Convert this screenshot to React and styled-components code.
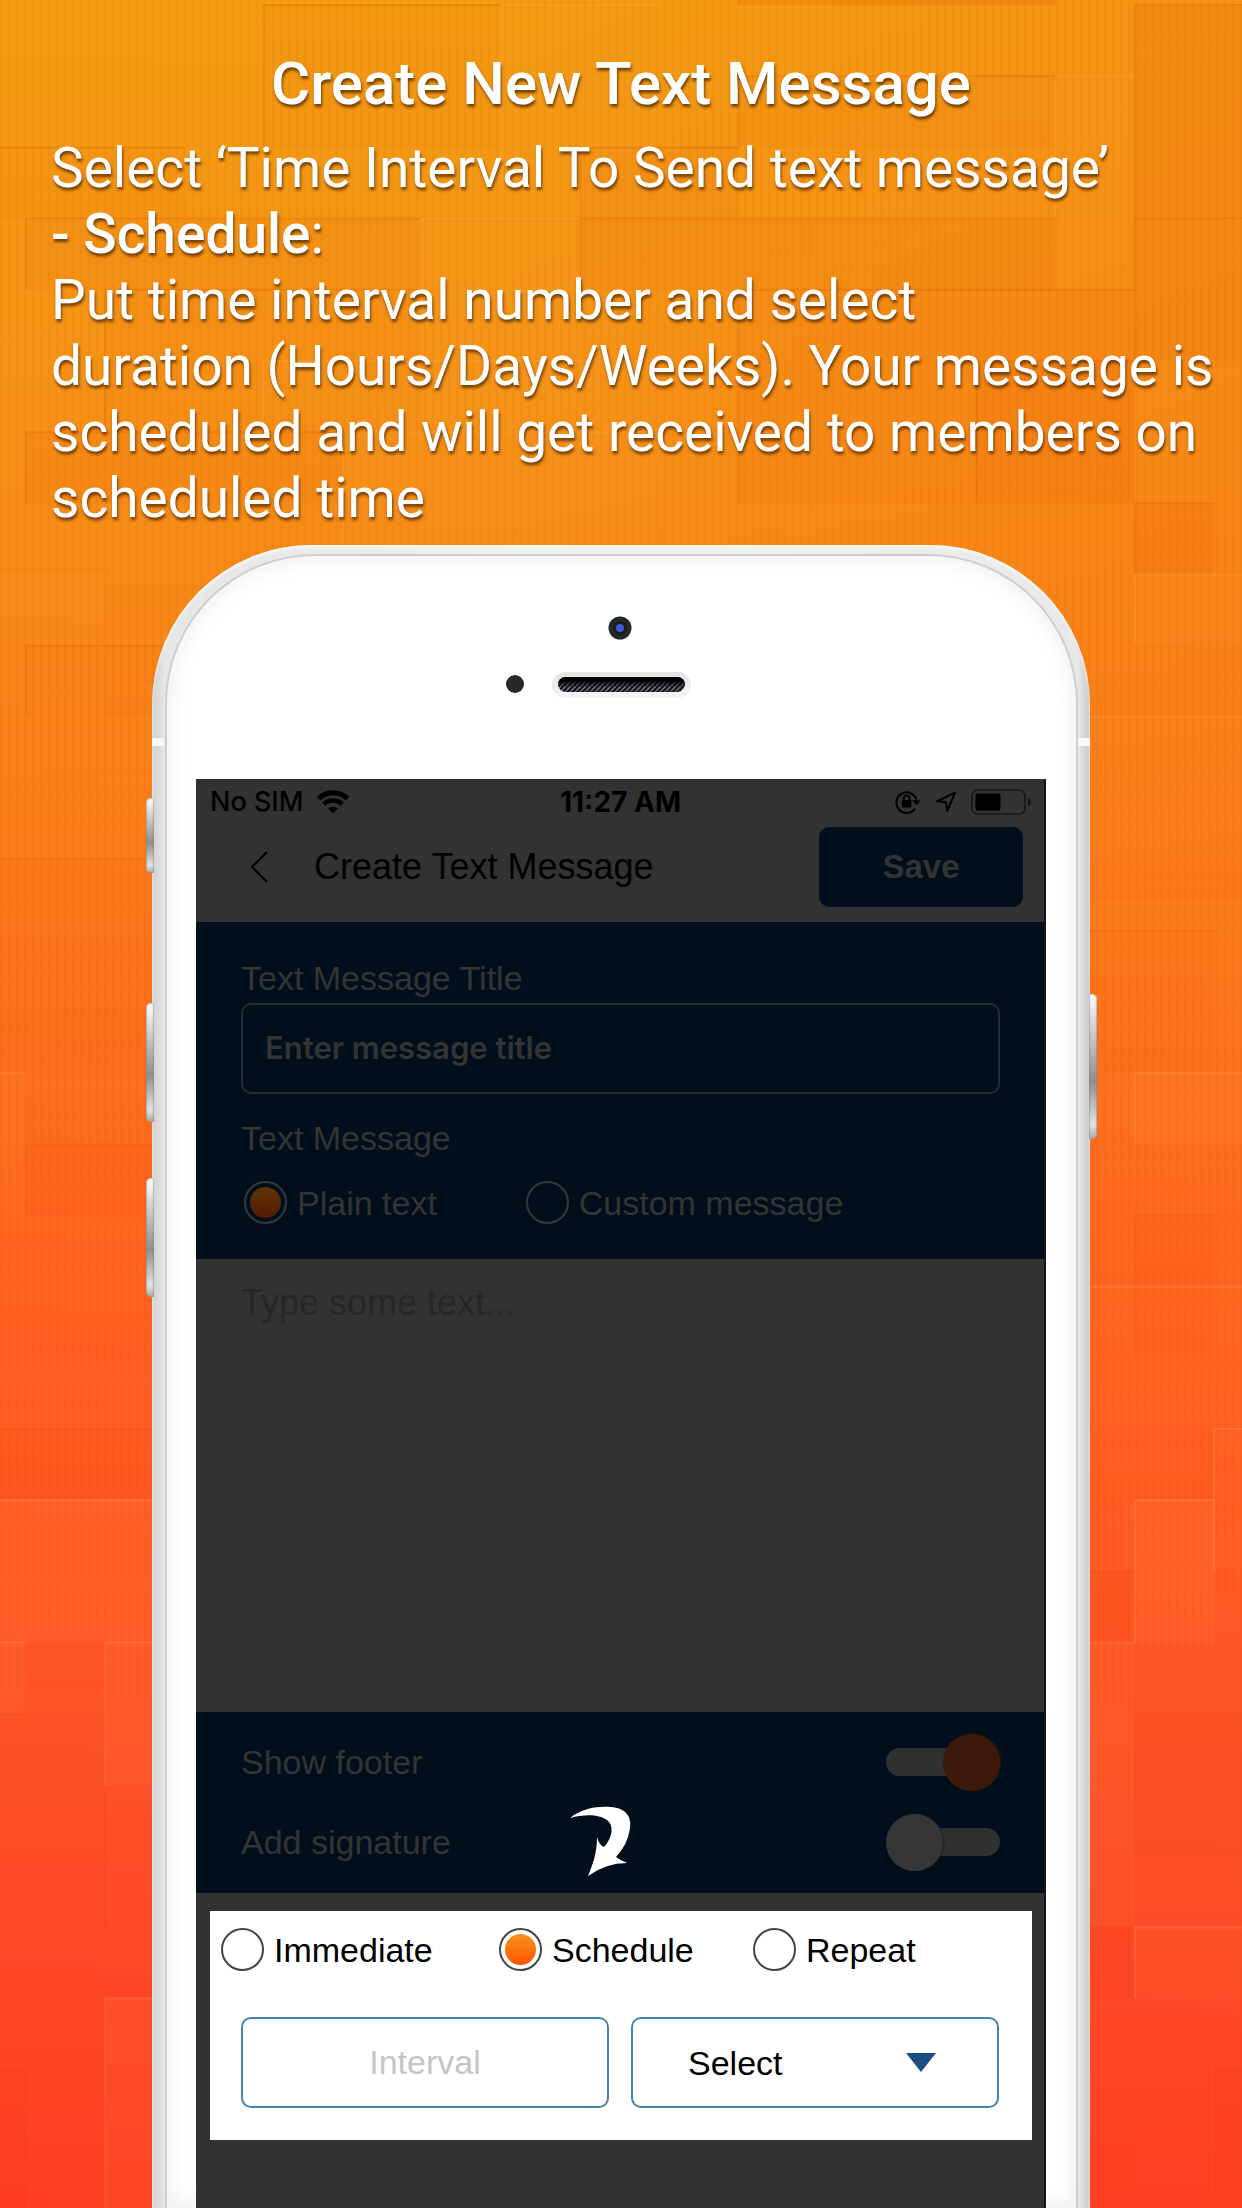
import React from "react";
import styled, { createGlobalStyle, css } from "styled-components";

const sans = '"Liberation Sans", Arial, sans-serif';
const system = 'Inter, "Liberation Sans", sans-serif';

const GlobalStyle = createGlobalStyle`
  *, *::before, *::after { box-sizing: border-box; }
  body { margin: 0; background: #ff4224; }
  h1, h2, p, fieldset { margin: 0; padding: 0; border: 0; min-width: 0; }
  input, textarea, select, button { font: inherit; margin: 0; outline: none; }
`;

const Page = styled.main`
  position: relative;
  isolation: isolate;
  display: flex;
  flex-direction: column;
  min-height: 100vh;
  overflow: hidden;
  font-family: Roboto, sans-serif;
  color: #fff;
`;

const Backdrop = styled.svg`
  position: absolute;
  inset: 0;
  z-index: -1;
  width: 100%;
  height: 100%;
`;

const Intro = styled.header`
  padding: 51px 0 0 51px;
  text-shadow: 1px 3px 3px rgba(60, 30, 0, 0.7);
`;

const Title = styled.h1`
  margin: 0 0 18px;
  padding-right: 51px;
  text-align: center;
  font-size: 60px;
  line-height: 66px;
  font-weight: 500;
`;

const Copy = styled.p`
  font-size: 55px;
  line-height: 66px;
  white-space: pre-line;
  strong { font-weight: 500; }
`;

const Phone = styled.section`
  position: relative;
  flex: 1;
  display: flex;
  flex-direction: column;
  width: 76%;
  max-width: 938px;
  margin: 14px auto 0;
  padding: 9px 12px 0 13px;
  border-radius: 160px 160px 0 0;
  background: linear-gradient(90deg, #d0d0d0 0, #e6e6e6 13px, #f4f4f4 50%, #e8e8e8 926px, #c6c6c6 100%);
  box-shadow: inset 0 2px 3px #fafafa;
`;

const Face = styled.div`
  flex: 1;
  display: flex;
  flex-direction: column;
  padding: 0 30px 0 29px;
  border: solid #cfcfcf;
  border-width: 2px 2px 0;
  border-radius: 150px 150px 0 0;
  background: #fff;
  box-shadow: inset 0 0 20px 4px #f1f1f1;
`;

const SideButton = styled.i`
  position: absolute;
  top: ${(p) => p.$top}px;
  ${(p) => (p.$right ? "right: -7px;" : "left: -6px;")}
  width: 8px;
  height: ${(p) => p.$length}px;
  border-radius: ${(p) => (p.$right ? "1px 5px 5px 1px" : "5px 1px 1px 5px")};
  background: linear-gradient(#fff, #d8d8d8 20%, #8f8f8f 60%, #e2e2e2 90%, #aaa);
  box-shadow: inset 0 0 1px 1px rgba(130, 130, 130, 0.5);
`;

const Band = styled.i`
  position: absolute;
  top: 193px;
  ${(p) => (p.$right ? "right: 0;" : "left: 0;")}
  width: 12px;
  height: 8px;
  background: #f8f8f8;
`;

const Sensors = styled.svg`
  display: block;
  align-self: center;
  width: 220px;
  height: 223px;
  overflow: visible;
`;

const Screen = styled.div`
  flex: 1;
  padding-bottom: 68px;
  border-right: 2px solid #151515;
  background: #323232;
  color: #000;
  font-family: ${sans};
  font-size: 34px;
  line-height: 40px;
`;

const StatusBar = styled.div`
  display: grid;
  grid-template-columns: 1fr auto 1fr;
  align-items: center;
  height: 46px;
  padding: 0 13px 0 14px;
  font-family: ${system};
  font-size: 27px;
  line-height: 32px;
  font-weight: 500;
  white-space: nowrap;
`;

const StatusGroup = styled.div`
  display: flex;
  align-items: center;
  gap: 14px;
  ${(p) => p.$end && "justify-content: flex-end;"}
`;

const Clock = styled.time`
  font-size: 28px;
  font-weight: 700;
`;

const NavBar = styled.div`
  display: flex;
  align-items: center;
  height: 97px;
  padding: 0 21px 14px 46px;
`;

const BackButton = styled.button`
  display: flex;
  padding: 8px;
  border: 0;
  background: none;
  color: #000;
`;

const NavTitle = styled.h2`
  flex: 1;
  margin-left: 38px;
  font-size: 36px;
  line-height: 40px;
  font-weight: 400;
`;

const SaveButton = styled.button`
  width: 204px;
  height: 80px;
  border: 1px solid #001424;
  border-radius: 10px;
  background: #000f1b;
  color: #333;
  font-size: 33px !important;
  font-weight: 700 !important;
`;

const Panel = styled.div`
  padding: ${(p) => p.$pad};
  background: #000f1b;
  color: #343434;
`;

const Label = styled.label`
  display: block;
  line-height: 40px;
`;

const fieldBox = css`
  display: block;
  width: 100%;
  height: 91px;
  border: 2px solid ${(p) => (p.$dim ? "#252b30" : "#4583b0")};
  border-radius: 10px;
`;

const TitleInput = styled.input`
  ${fieldBox}
  margin: 5px 0 24px;
  padding: 0 22px 2px;
  background: transparent;
  color: #333;
  font: 600 31px/40px ${system} !important;
  &::placeholder { color: #343434; opacity: 1; }
`;

const Group = styled.fieldset`
  legend { padding: 0; }
`;

const RadioRow = styled.div`
  display: grid;
  grid-template-columns: ${(p) => p.$columns};
  margin: ${(p) => p.$margin};
`;

const Choice = styled.label`
  display: flex;
  align-items: center;
  gap: 10px;
  white-space: nowrap;
`;

const Radio = styled.input`
  appearance: none;
  flex: none;
  width: 43px;
  height: 43px;
  padding: 4px;
  border: 2px solid ${(p) => (p.$dim ? "#33383b" : "#444")};
  border-radius: 50%;
  &:checked::before {
    content: "";
    display: block;
    width: 31px;
    height: 31px;
    border-radius: 50%;
    background: ${(p) =>
      p.$dim ? "linear-gradient(#5e3405, #521a00)" : "linear-gradient(#f7931a, #ff5400)"};
  }
`;

const Message = styled.textarea`
  display: block;
  width: 100%;
  height: 453px;
  padding: 24px 45px;
  border: 0;
  resize: none;
  background: #323232;
  font-size: 36px !important;
  line-height: 40px !important;
  &::placeholder { color: #262626; opacity: 1; }
`;

const SwitchRow = styled.label`
  display: flex;
  align-items: center;
  justify-content: space-between;
  height: 80px;
`;

const Switch = styled.input`
  appearance: none;
  display: grid;
  align-items: center;
  width: 114px;
  height: 57px;
  &::before, &::after { content: ""; grid-area: 1 / 1; }
  &::before {
    height: 28px;
    border-radius: 14px;
    background: #303030;
  }
  &::after {
    width: 57px;
    height: 57px;
    border-radius: 50%;
    background: #363636;
    box-shadow: 1px 0 2px #1c1c1c;
  }
  &:checked::after {
    justify-self: end;
    background: #3d180b;
  }
`;

const Pointer = styled.svg`
  position: absolute;
  right: 4px;
  top: 4px;
`;

const PointerAnchor = styled.div`
  position: relative;
  width: 52%;
  height: 0;
`;

const Card = styled.div`
  margin: 18px 12px 0 14px;
  padding: 17px 11px 32px;
  background: #fff;
`;

const Fields = styled.div`
  display: grid;
  grid-template-columns: 1fr 1fr;
  gap: 22px;
  margin: 46px 22px 0 20px;
`;

const Interval = styled.input`
  ${fieldBox}
  background: #fff;
  text-align: center;
  &::placeholder { color: #c4c4c9; opacity: 1; }
`;

const SelectWrap = styled.div`
  display: grid;
  align-items: center;
  > * { grid-area: 1 / 1; }
  svg { justify-self: end; margin-right: 63px; pointer-events: none; }
`;

const Select = styled.select`
  ${fieldBox}
  appearance: none;
  padding: 0 55px;
  background: #fff;
  color: #000;
`;

// Tiles are [column, row, columns wide, rows high, opacity]; negative opacity darkens.
const tiles = [
  [9, -1, 4, 1, -0.12], [3, 0, 3, 2, -0.03], [6, 0, 2, 3, 0.03], [14, 0, 2, 3, -0.07],
  [-1, 2, 3, 1, -0.03], [7, 2, 2, 1, -0.05], [9, 1, 4, 1, -0.03], [13, 1, 1, 2, 0.03],
  [0, 3, 5, 1, -0.05], [5, 3, 2, 2, 0.04], [7, 3, 6, 1, -0.06], [9, 4, 5, 3, -0.05],
  [1, 4, 4, 2, -0.03], [3, 5, 5, 1, 0.04], [0, 6, 4, 1, -0.05], [4, 6, 4, 2, 0.03],
  [14, 3, 2, 2, -0.06], [14, 7, 1, 1, -0.08], [12, 5, 2, 2, -0.06], [-1, 8, 2, 2, 0.03],
  [14, 8, 2, 1, 0.06], [13, 10, 3, 2, 0.05], [0, 9, 2, 1, -0.04], [-1, 12, 3, 3, -0.04],
  [0, 16, 2, 1, -0.07], [13, 13, 2, 2, -0.04], [14, 15, 2, 1, 0.06], [-1, 15, 1, 2, 0.04],
  [14, 17, 1, 2, -0.05], [-1, 20, 3, 1, -0.04], [-1, 21, 3, 2, 0.06], [13, 18, 3, 2, 0.04],
  [14, 21, 1, 2, 0.08], [15, 20, 1, 2, 0.04], [13, 22, 1, 1, -0.07], [-1, 23, 1, 1, 0.07],
  [1, 23, 1, 2, 0.06], [14, 24, 2, 2, -0.07], [13, 23, 1, 4, 0.04], [-1, 24, 2, 3, -0.02],
  [13, 27, 1, 1, -0.08], [14, 27, 2, 1, 0.04], [1, 28, 1, 3, 0.07], [15, 29, 1, 2, -0.07],
  [-1, 29, 1, 2, -0.02], [13, 30, 1, 1, -0.03],
];

function Background() {
  return (
    <Backdrop viewBox="0 0 1242 2208" preserveAspectRatio="none" aria-hidden="true">
      <defs>
        <linearGradient id="warm" gradientUnits="userSpaceOnUse" x1="340" y1="0" x2="260" y2="2208">
          <stop offset="0" stopColor="#f39d13" />
          <stop offset="0.2" stopColor="#f69016" />
          <stop offset="0.38" stopColor="#fa7d1a" />
          <stop offset="0.6" stopColor="#ff6020" />
          <stop offset="0.8" stopColor="#ff5129" />
          <stop offset="1" stopColor="#ff3e24" />
        </linearGradient>
        <linearGradient id="side">
          <stop offset="0.4" stopColor="#ff5a18" stopOpacity="0" />
          <stop offset="1" stopColor="#ff5a18" stopOpacity="0.16" />
        </linearGradient>
        <pattern id="ribs" width="8" height="8" patternUnits="userSpaceOnUse">
          <rect width="2" height="8" fill="#b33c00" opacity="0.05" />
        </pattern>
      </defs>
      <rect width="1242" height="2208" fill="url(#warm)" />
      <rect width="1242" height="900" fill="url(#side)" />
      {tiles.map(([c, r, w, h, tone], i) => {
        const x = 26 + c * 79.2;
        const y = 5 + r * 71.2;
        const light = tone > 0;
        return (
          <g key={i}>
            <rect x={x} y={y} width={w * 79.2} height={h * 71.2} fill={light ? "#ffc060" : "#e03000"} opacity={Math.abs(tone) * 0.9} />
            <path d={`M${x} ${y + h * 71.2}V${y}H${x + w * 79.2}`} fill="none" stroke={light ? "#ffb45c" : "#d85000"} strokeWidth="2" opacity="0.2" />
          </g>
        );
      })}
      <rect width="1242" height="2208" fill="url(#ribs)" />
    </Backdrop>
  );
}

function SensorArt() {
  return (
    <Sensors viewBox="0 0 220 223" aria-hidden="true">
      <defs>
        <pattern id="mesh" width="5" height="5" patternUnits="userSpaceOnUse">
          <rect width="5" height="5" fill="#15151b" />
          <path d="M0 5L5 0" stroke="#73717f" strokeWidth="1.5" />
        </pattern>
        <linearGradient id="shade" x2="0" y2="1">
          <stop offset="0.25" stopColor="#000" />
          <stop offset="0.65" stopColor="#000" stopOpacity="0" />
        </linearGradient>
        <linearGradient id="rim" x2="0" y2="1">
          <stop offset="0" stopColor="#e3e3e3" />
          <stop offset="1" stopColor="#f6f6fa" />
        </linearGradient>
      </defs>
      <circle cx="109" cy="72" r="11.5" fill="#25282a" />
      <circle cx="109" cy="72" r="7" fill="#191b20" />
      <circle cx="109" cy="72" r="4" fill="#3d5bd9" />
      <circle cx="4" cy="128" r="9" fill="#252729" />
      <rect x="41" y="116" width="139" height="26" rx="13" fill="url(#rim)" />
      <rect x="47" y="121" width="127" height="15" rx="7.5" fill="url(#mesh)" />
      <rect x="47" y="121" width="127" height="15" rx="7.5" fill="url(#shade)" />
    </Sensors>
  );
}

const WifiIcon = () => (
  <svg width="32" height="24" viewBox="0 0 32 24" aria-hidden="true">
    <g fill="none" stroke="#000" strokeWidth="5">
      <path d="M1.5 8.5A21 21 0 0 1 30.5 8.5" />
      <path d="M6.8 14.2A13.2 13.2 0 0 1 25.2 14.2" strokeWidth="4.4" />
    </g>
    <path d="M11.3 18.6A6.8 6.8 0 0 1 20.7 18.6L16 23.6Z" />
  </svg>
);

const LockIcon = () => (
  <svg width="26" height="24" viewBox="0 0 26 24" aria-hidden="true">
    <path d="M21.4 9.5A10.3 10.3 0 1 0 20 18.7" fill="none" stroke="#000" strokeWidth="2" />
    <path d="M17 10.2H26L21.6 15.2Z" />
    <rect x="6.8" y="10" width="9.6" height="7.4" rx="1" />
    <path d="M8.7 10.5V8.3a2.9 2.9 0 0 1 5.8 0V10.5" fill="none" stroke="#000" strokeWidth="1.7" />
  </svg>
);

const LocationIcon = () => (
  <svg width="22" height="22" viewBox="0 0 22 22" aria-hidden="true">
    <path d="M20 1.7L2 10.3L11 11.2L12.2 20Z" fill="none" stroke="#000" strokeWidth="2" strokeLinejoin="round" />
  </svg>
);

const BatteryIcon = () => (
  <svg width="60" height="26" viewBox="0 0 60 26" aria-hidden="true">
    <rect x="1" y="1" width="53" height="24" rx="6" fill="none" stroke="#171717" strokeWidth="1.6" />
    <rect x="4.5" y="4.5" width="25" height="17" rx="2" />
    <path d="M57 9Q60 10 60 13T57 17Z" fill="#171717" />
  </svg>
);

function Option({ name, label, dim, checked }) {
  return (
    <Choice>
      <Radio type="radio" name={name} defaultChecked={checked} $dim={dim} />
      {label}
    </Choice>
  );
}

export default function App() {
  return (
    <Page>
      <GlobalStyle />
      <Background />
      <Intro>
        <Title>Create New Text Message</Title>
        <Copy>
          Select ‘Time Interval To Send text message’{"\n"}
          <strong>- Schedule</strong>:{"\n"}
          Put time interval number and select{"\n"}
          duration (Hours/Days/Weeks). Your message is{"\n"}
          scheduled and will get received to members on{"\n"}
          scheduled time
        </Copy>
      </Intro>
      <Phone>
        <SideButton $top={253} $length={75} />
        <SideButton $top={458} $length={119} />
        <SideButton $top={633} $length={119} />
        <SideButton $top={449} $length={145} $right />
        <Band />
        <Band $right />
        <Face>
          <SensorArt />
          <Screen>
            <StatusBar>
              <StatusGroup>No SIM <WifiIcon /></StatusGroup>
              <Clock>11:27 AM</Clock>
              <StatusGroup $end>
                <LockIcon />
                <LocationIcon />
                <BatteryIcon />
              </StatusGroup>
            </StatusBar>
            <NavBar>
              <BackButton type="button" aria-label="Back">
                <svg width="18" height="32" viewBox="0 0 18 32" fill="none" stroke="currentColor" strokeWidth="2">
                  <path d="M17 1L2 16L17 31" />
                </svg>
              </BackButton>
              <NavTitle>Create Text Message</NavTitle>
              <SaveButton type="button">Save</SaveButton>
            </NavBar>
            <Panel $pad="36px 44px 35px 45px">
              <Label htmlFor="title">Text Message Title</Label>
              <TitleInput id="title" placeholder="Enter message title" $dim />
              <Group>
                <legend>Text Message</legend>
                <RadioRow $columns="284fr 478fr" $margin="23px 0 0 3px">
                  <Option name="kind" label="Plain text" dim checked />
                  <Option name="kind" label="Custom message" dim />
                </RadioRow>
              </Group>
            </Panel>
            <Message placeholder="Type some text..." aria-label="Message text" />
            <Panel $pad="10px 44px 11px 45px">
              <SwitchRow>
                Show footer
                <Switch type="checkbox" role="switch" defaultChecked />
              </SwitchRow>
              <PointerAnchor>
                <Pointer width="62" height="72" viewBox="0 0 62 72" aria-hidden="true">
                  <path d="M0 12C12 2 28 0 41 1C55 2 62 10 60 22C58 36 52 44 46 51Q50 54 57 57Q36 57 18 70C23 58 27 47 27 31Q29 39 34 41C43 31 44 19 37 14C29 8 14 8 0 12Z" fill="#fff" />
                </Pointer>
              </PointerAnchor>
              <SwitchRow>
                Add signature
                <Switch type="checkbox" role="switch" />
              </SwitchRow>
            </Panel>
            <Card>
              <RadioRow $columns="278fr 254fr 268fr" $margin="0">
                <Option name="timing" label="Immediate" />
                <Option name="timing" label="Schedule" checked />
                <Option name="timing" label="Repeat" />
              </RadioRow>
              <Fields>
                <Interval placeholder="Interval" aria-label="Interval" />
                <SelectWrap>
                  <Select aria-label="Duration" defaultValue="">
                    <option value="">Select</option>
                    <option>Hours</option>
                    <option>Days</option>
                    <option>Weeks</option>
                  </Select>
                  <svg width="30" height="19" viewBox="0 0 30 19" aria-hidden="true">
                    <path d="M0 0H30L15 19Z" fill="#1b4f83" />
                  </svg>
                </SelectWrap>
              </Fields>
            </Card>
          </Screen>
        </Face>
      </Phone>
    </Page>
  );
}
